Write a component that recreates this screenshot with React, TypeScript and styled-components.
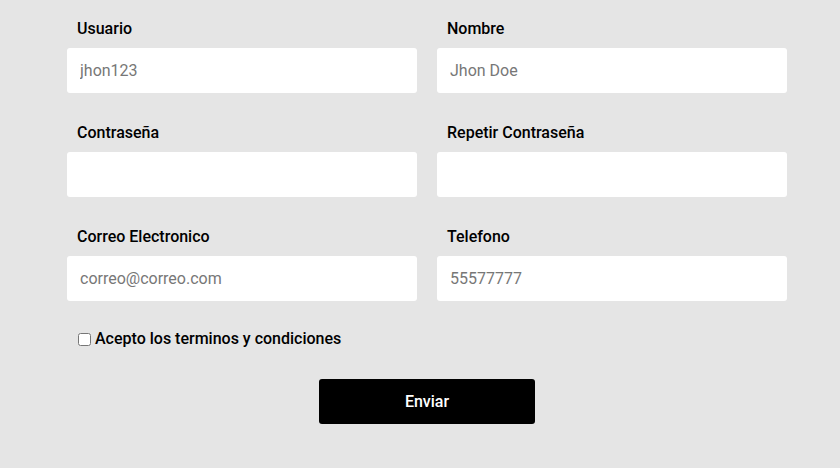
import React from "react";
import styled, { createGlobalStyle } from "styled-components";

const GlobalStyle = createGlobalStyle`
  html, body {
    margin: 0;
    padding: 0;
    background: #e5e5e5;
  }
  body {
    font-family: "Roboto", "Liberation Sans", sans-serif;
  }
`;

const Page = styled.div`
  width: 840px;
  height: 468px;
  background: #e5e5e5;
  box-sizing: border-box;
  padding: 19px 53px 0 67px;
`;

const Form = styled.form`
  display: flex;
  flex-direction: column;
`;

const Grid = styled.div`
  display: grid;
  grid-template-columns: 350px 350px;
  column-gap: 20px;
  row-gap: 30px;
`;

const Field = styled.div`
  display: flex;
  flex-direction: column;
`;

const Label = styled.label`
  font-family: "Roboto", "Liberation Sans", sans-serif;
  font-weight: 500;
  font-size: 16px;
  line-height: 20px;
  color: #000;
  padding-left: 10px;
  margin-bottom: 9px;
`;

const Input = styled.input`
  height: 45px;
  box-sizing: border-box;
  border: none;
  border-radius: 3px;
  background: #fff;
  padding: 0 13px;
  font-family: "Roboto", "Liberation Sans", sans-serif;
  font-size: 16px;
  color: #333;
  outline: none;

  &::placeholder {
    color: #777;
  }
`;

const TermsRow = styled.label`
  display: flex;
  align-items: center;
  gap: 4px;
  margin-top: 28px;
  padding-left: 11px;
  font-family: "Roboto", "Liberation Sans", sans-serif;
  font-weight: 500;
  font-size: 16px;
  line-height: 20px;
  color: #000;
`;

const Checkbox = styled.input`
  width: 13px;
  height: 13px;
  margin: 0;
`;

const Actions = styled.div`
  display: flex;
  justify-content: center;
  margin-top: 30px;
`;

const SubmitButton = styled.button`
  width: 216px;
  height: 45px;
  border: none;
  border-radius: 3px;
  background: #000;
  color: #fff;
  font-family: "Roboto", "Liberation Sans", sans-serif;
  font-weight: 500;
  font-size: 16px;
  cursor: pointer;
`;

const fields = [
  { label: "Usuario", placeholder: "jhon123", type: "text" },
  { label: "Nombre", placeholder: "Jhon Doe", type: "text" },
  { label: "Contraseña", placeholder: "", type: "password" },
  { label: "Repetir Contraseña", placeholder: "", type: "password" },
  { label: "Correo Electronico", placeholder: "correo@correo.com", type: "email" },
  { label: "Telefono", placeholder: "55577777", type: "tel" },
];

const App: React.FC = () => {
  return (
    <>
      <GlobalStyle />
      <Page>
        <Form onSubmit={(e) => e.preventDefault()}>
          <Grid>
            {fields.map((f) => (
              <Field key={f.label}>
                <Label>{f.label}</Label>
                <Input type={f.type} placeholder={f.placeholder} />
              </Field>
            ))}
          </Grid>
          <TermsRow>
            <Checkbox type="checkbox" />
            Acepto los terminos y condiciones
          </TermsRow>
          <Actions>
            <SubmitButton type="submit">Enviar</SubmitButton>
          </Actions>
        </Form>
      </Page>
    </>
  );
};

export default App;
